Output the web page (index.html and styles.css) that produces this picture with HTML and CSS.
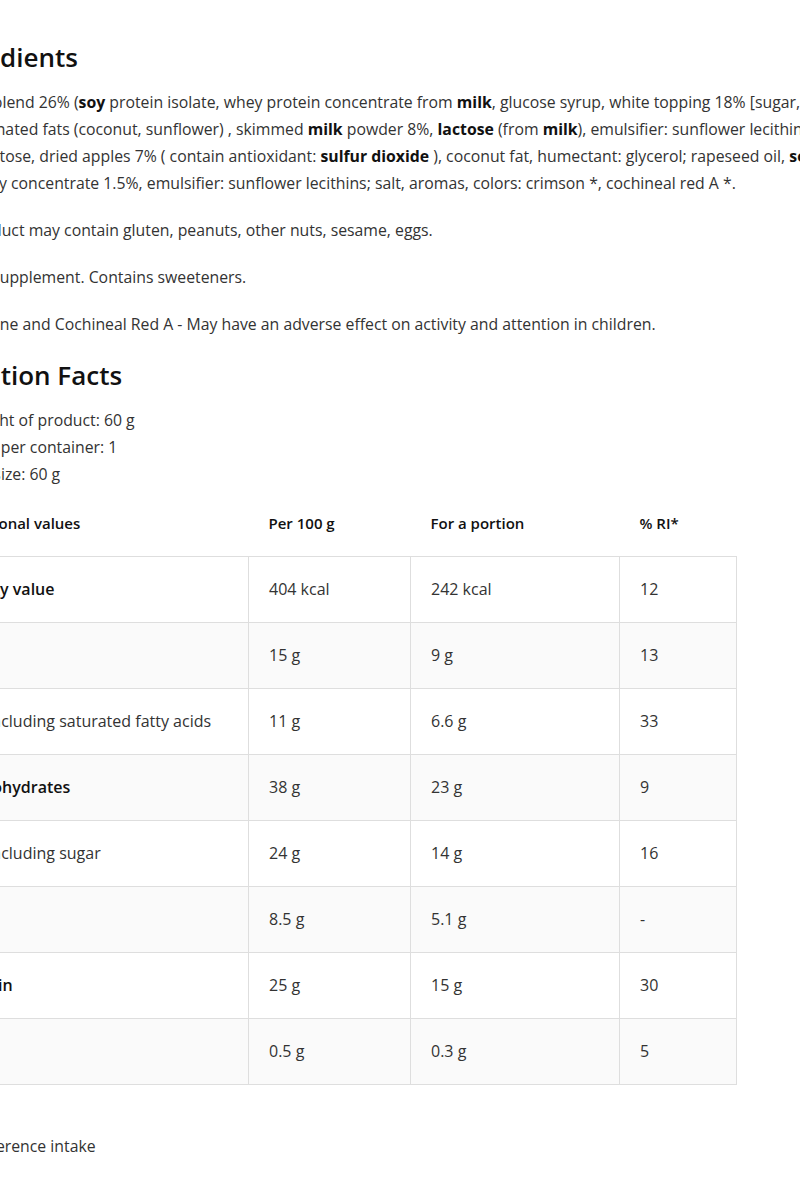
FILE: index.html
```html
<!DOCTYPE html>
<html lang="en">
<head>
    <meta charset="UTF-8">
    <meta name="viewport" content="width=device-width, initial-scale=1.0">
    <title>Ingredients and Nutrition Facts</title>
    <link rel="stylesheet" href="styles.css">
</head>
<body>
  <div class="product-info">
    <!-- Ingredients -->
    <h2 class="section-title">Ingredients</h2>
    <p class="text">
      Protein blend 26% (<b>soy</b> protein isolate, whey protein concentrate from <b>milk</b>, glucose syrup, white topping 18% [sugar, fully<br>
      hydrogenated fats (coconut, sunflower) , skimmed <b>milk</b> powder 8%, <b>lactose</b> (from <b>milk</b>), emulsifier: sunflower lecithins],<br>
      oligofructose, dried apples 7% ( contain antioxidant: <b>sulfur dioxide</b> ), coconut fat, humectant: glycerol; rapeseed oil, <b>soy</b> crisps,<br>
      cranberry concentrate 1.5%, emulsifier: sunflower lecithins; salt, aromas, colors: crimson *, cochineal red A *.
    </p>
    <p class="text">The product may contain gluten, peanuts, other nuts, sesame, eggs.</p>
    <p class="text">Dietary supplement. Contains sweeteners.</p>
    <p class="text">Carmoisine and Cochineal Red A - May have an adverse effect on activity and attention in children.</p>

    <!-- Nutrition facts -->
    <h2 class="section-title">Nutrition Facts</h2>
    <p class="text facts">
      Net weight of product: 60 g<br>
      Servings per container: 1<br>
      Portion size: 60 g
    </p>

    <table class="nutrition">
      <colgroup>
        <col class="col-name">
        <col class="col-100">
        <col class="col-portion">
        <col class="col-ri">
      </colgroup>
      <thead>
        <tr>
          <th class="first">Nutritional values</th>
          <th>Per 100 g</th>
          <th>For a portion</th>
          <th>% RI*</th>
        </tr>
      </thead>
      <tbody>
        <tr><td class="main">Energy value</td><td>404 kcal</td><td>242 kcal</td><td>12</td></tr>
        <tr><td class="main">Fat</td><td>15 g</td><td>9 g</td><td>13</td></tr>
        <tr><td class="sub">- including saturated fatty acids</td><td>11 g</td><td>6.6 g</td><td>33</td></tr>
        <tr><td class="main">Carbohydrates</td><td>38 g</td><td>23 g</td><td>9</td></tr>
        <tr><td class="sub">- including sugar</td><td>24 g</td><td>14 g</td><td>16</td></tr>
        <tr><td class="main">Fibre</td><td>8.5 g</td><td>5.1 g</td><td>-</td></tr>
        <tr><td class="main">Protein</td><td>25 g</td><td>15 g</td><td>30</td></tr>
        <tr><td class="main">Salt</td><td>0.5 g</td><td>0.3 g</td><td>5</td></tr>
      </tbody>
    </table>

    <p class="text note">* RI - reference intake</p>
  </div>
</body>
</html>
```

FILE: styles.css
```css
/* page */
body {
    margin: 0;
    padding: 40px 0 0;
    background: #fff;
    color: #333;
    font-family: 'Open Sans', 'Liberation Sans', sans-serif;
    overflow: hidden;
}

/* the block starts left of the visible window */
.product-info {
    margin-left: -65px;
    width: 1100px;
}

.section-title {
    margin: 0 0 15px;
    font-size: 26px;
    line-height: 34px;
    font-weight: 600;
    color: #111;
}

.text {
    margin: 0 0 20px;
    font-size: 15.8px;
    line-height: 27px;
    white-space: nowrap;
}

.text b {
    font-weight: 700;
    color: #111;
}

.facts {
    margin-bottom: 2px;
}

/* nutrition table */
.nutrition {
    width: 801px;
    border-collapse: collapse;
    table-layout: fixed;
    font-size: 16px;
}

.col-name { width: 313px; }
.col-100 { width: 162px; }
.col-portion { width: 209px; }
.col-ri { width: 117px; }

.nutrition th,
.nutrition td {
    height: 66px;
    padding: 0 20px;
    text-align: left;
    white-space: nowrap;
    box-sizing: border-box;
}

.nutrition th {
    font-size: 15px;
    font-weight: 600;
    color: #111;
}

.nutrition th.first {
    padding-left: 15px;
}

.nutrition td {
    border: 1px solid #dedede;
    color: #333;
}

.nutrition tbody tr:nth-child(even) {
    background: #fafafa;
}

.nutrition td.main {
    font-weight: 600;
    color: #111;
}

.nutrition td.sub {
    padding-left: 42px;
}

.note {
    margin-top: 48px;
}
```
